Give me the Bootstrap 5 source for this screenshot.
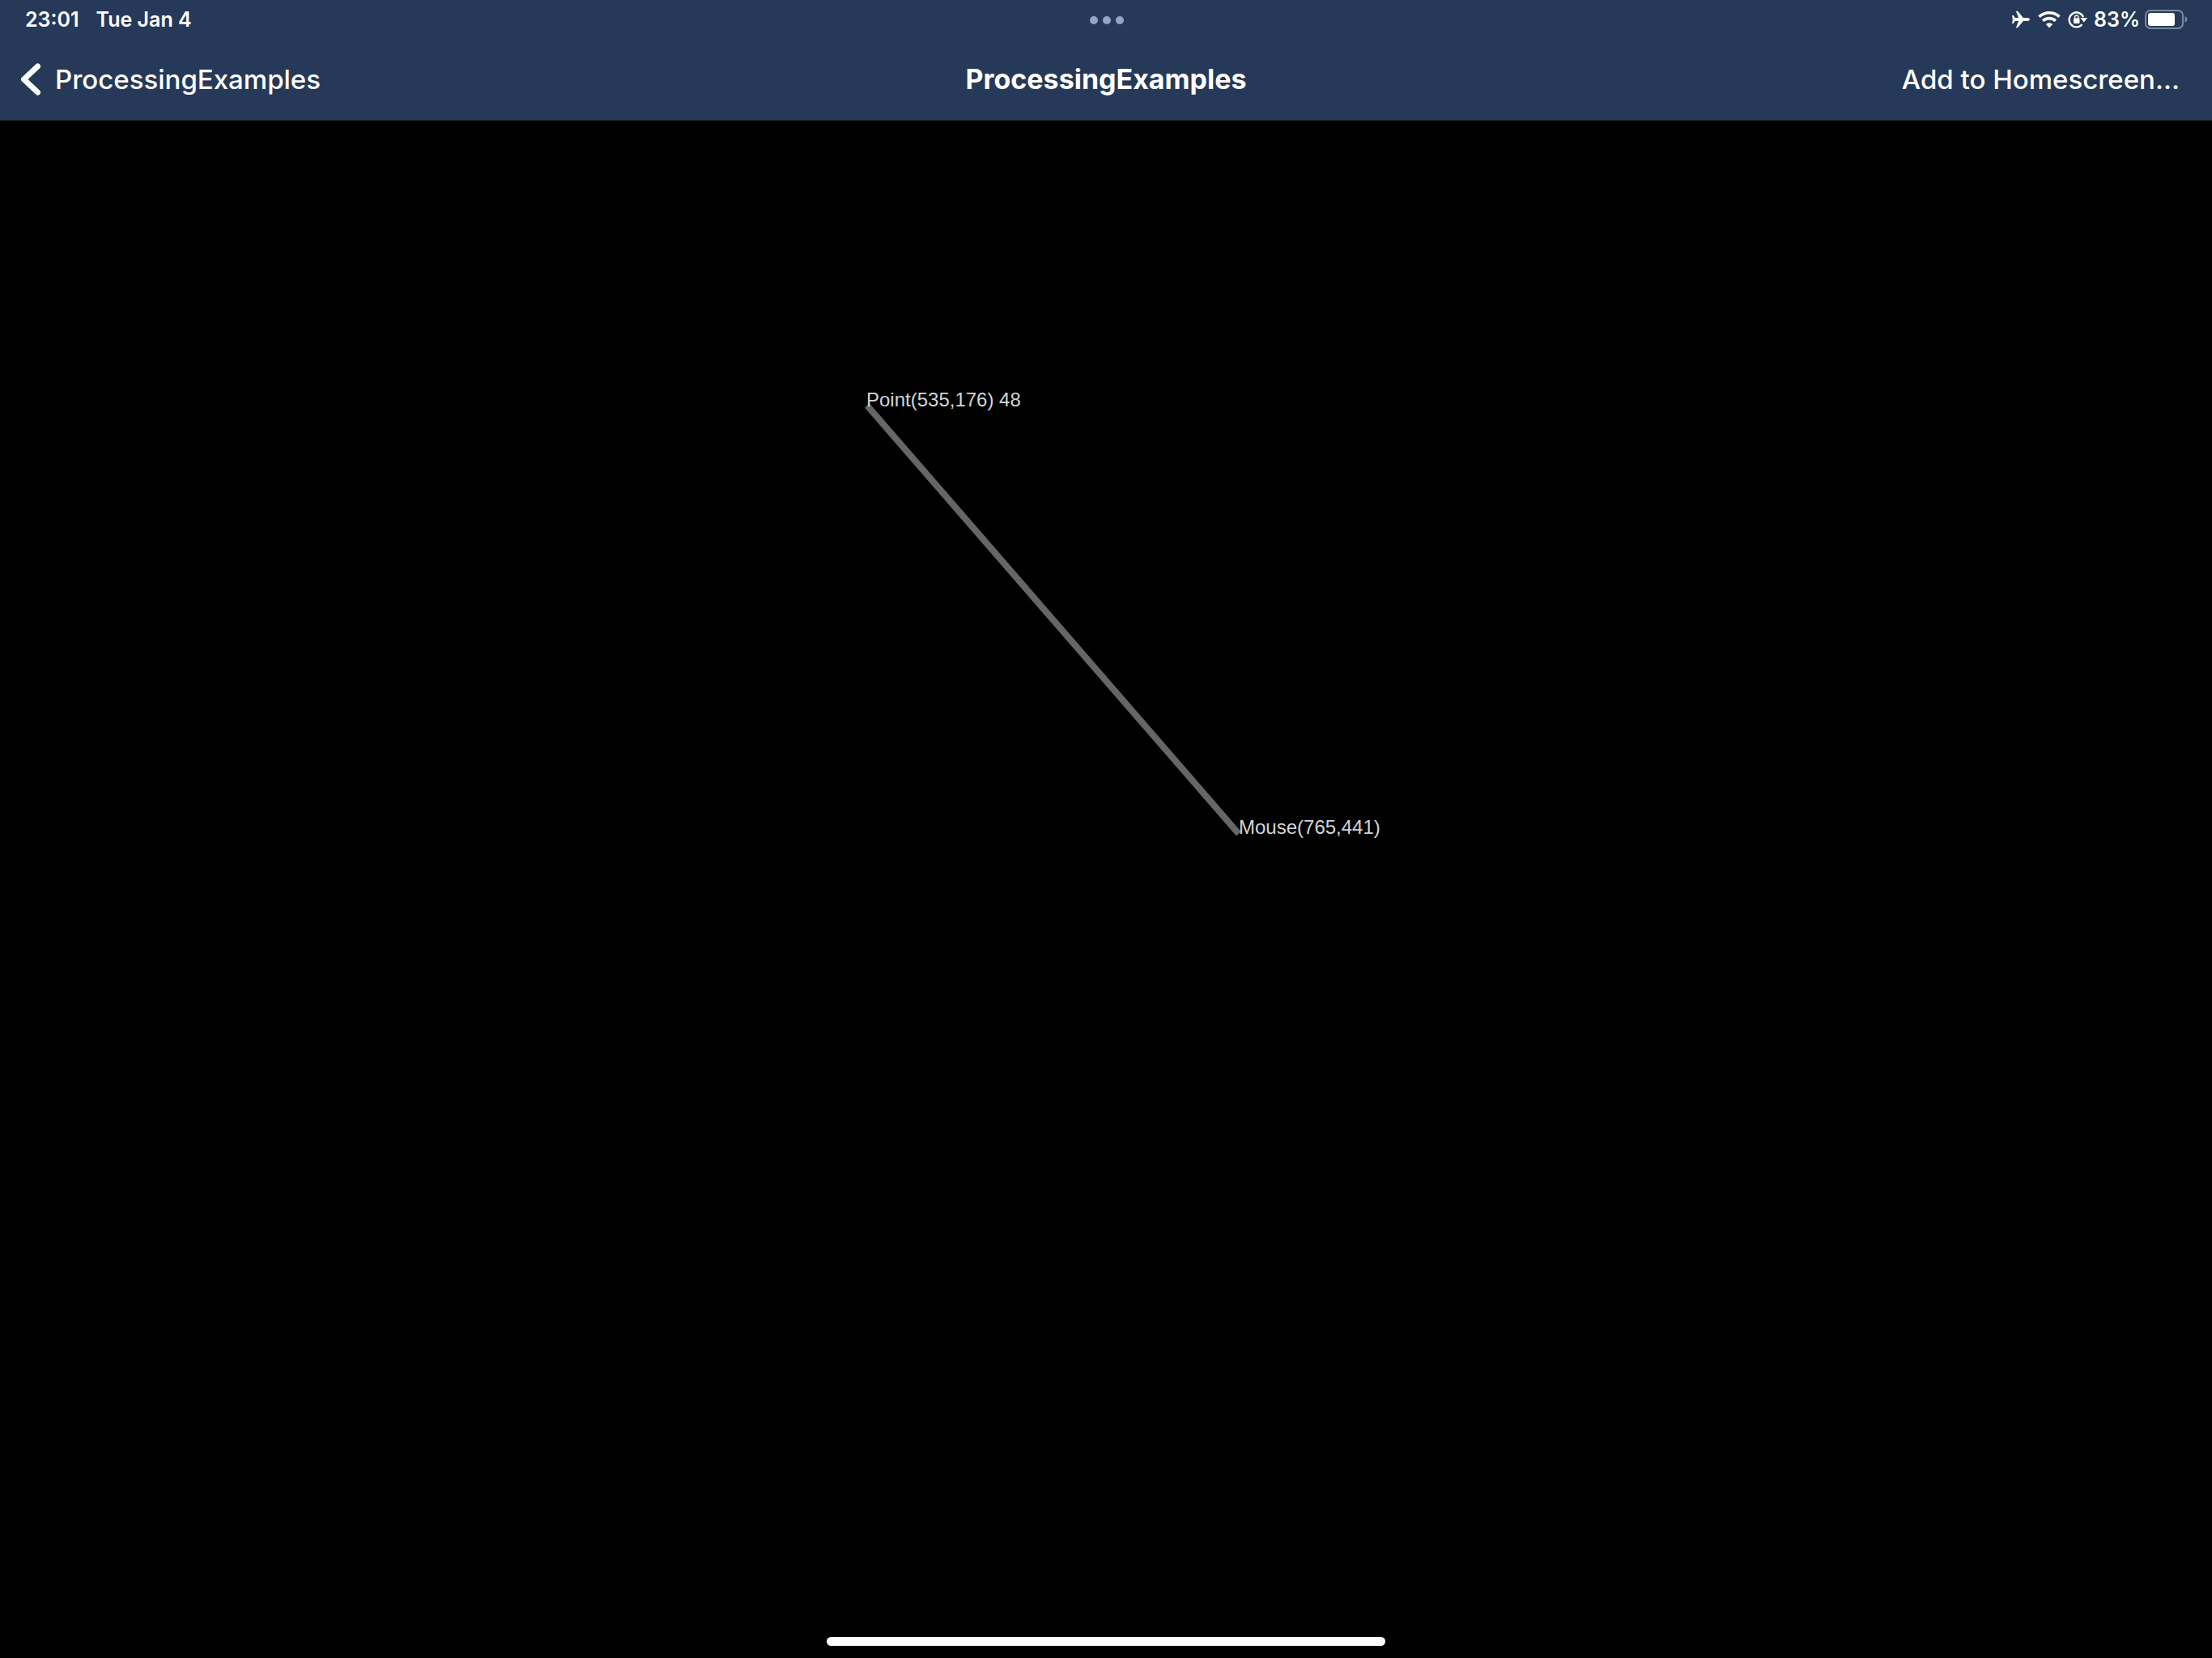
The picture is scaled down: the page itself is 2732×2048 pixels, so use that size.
<!DOCTYPE html>
<html lang="en">
<head>
<meta charset="utf-8">
<meta name="viewport" content="width=device-width, initial-scale=1">
<title>ProcessingExamples</title>
<link rel="stylesheet" href="https://cdn.jsdelivr.net/npm/bootstrap@5.3.0/dist/css/bootstrap.min.css">
<style>
  body { font-family: Inter, "Liberation Sans", sans-serif; background: #000; color: #fff; }
  .app-header { background: #263958; border-bottom: 1px solid #2b2f38; }
  .status-bar { height: 48px; padding: 0 30px; font-size: 25px; line-height: 48px; font-weight: 600; }
  .status-side, .nav-side { flex: 1 1 0; }
  .status-side { gap: 8px; }
  .status-clock { gap: 21px; padding-left: 1px; }
  .status-bar svg, .nav-row svg { display: block; flex: none; }
  .status-dots { gap: 6px; padding-top: 2px; }
  .status-dots span { width: 10px; height: 10px; border-radius: 50%; background: #93a6c8; }
  .battery { gap: 5px; }
  .nav-row { height: 100px; padding: 0 24px; }
  .nav-row a, .nav-row button { color: #fff; font-size: 33px; line-height: 40px; font-weight: 500; }
  .nav-row button { margin-right: 16px; }
  .nav-row h1 { font-size: 34px; line-height: 40px; font-weight: 700; }
  .back-link { gap: 18px; }
  .sketch { min-height: 0; }
  .sketch text { font-family: "Liberation Sans", Arial, sans-serif; font-size: 24px; fill: #d4d4d4; }
  .home-bar { bottom: 15px; width: 690px; height: 11px; border-radius: 6px; background: #fff; }
</style>
<script src="https://cdn.jsdelivr.net/npm/bootstrap@5.3.0/dist/js/bootstrap.bundle.min.js"></script>
</head>
<body class="vh-100 d-flex flex-column overflow-hidden">
<header class="app-header">
  <div class="status-bar d-flex align-items-center">
    <div class="status-side status-clock d-flex"><span>23:01</span><span>Tue Jan 4</span></div>
    <div class="status-dots d-flex" aria-hidden="true"><span></span><span></span><span></span></div>
    <div class="status-side d-flex justify-content-end align-items-center">
      <svg width="24" height="22" viewBox="0 0 24 22" fill="#fff" role="img" aria-label="Airplane mode"><path d="M23 11c0-1.200-1.500-2-3.500-2h-4.700L8.700 1.400Q8.100.7 7.200.7H5.900l3.200 8.300H4.800L2.600 6H1l.9 5L1 16h1.600l2.200-3h4.300l-3.200 8.300h1.300q.9 0 1.500-.7l6.100-7.600h4.700c2 0 3.500-.8 3.500-2z"/></svg>
      <svg width="30" height="22" viewBox="0 0 30 22" fill="none" role="img" aria-label="Wi-Fi"><path d="M2.500 7.800a18 18 0 0 1 25 0M7.200 12.800a11.200 11.200 0 0 1 15.600 0" stroke="#fff" stroke-width="3.600"/><path d="M10.800 17a6.200 6.200 0 0 1 8.400 0L15 21.500z" fill="#fff"/></svg>
      <svg width="24" height="22" viewBox="0 0 24 22" fill="none" role="img" aria-label="Rotation lock"><path d="M19 8A9 9 0 1 0 17.500 17.200" stroke="#fff" stroke-width="2.400"/><path d="M15.500 9H24l-4.200 5.500z" fill="#fff"/><rect x="7" y="9.500" width="7.500" height="6.500" rx="1" fill="#fff"/><path d="M8.700 10V8a2.050 2.050 0 0 1 4.100 0v2" stroke="#fff" stroke-width="1.500"/></svg>
      <div class="battery d-flex align-items-center">
        <span>83%</span>
        <svg width="54" height="24" viewBox="0 0 54 24" role="img" aria-label="Battery"><rect x="2" y="1" width="46" height="22" rx="6" fill="none" stroke="#7c899f" stroke-width="2"/><rect x="5" y="4" width="33" height="16" rx="3" fill="#fff"/><path d="M50.500 8q3 1.300 3 4t-3 4z" fill="#7c899f"/></svg>
      </div>
    </div>
  </div>
  <nav class="nav-row d-flex align-items-center">
    <div class="nav-side d-flex"><a href="#" class="back-link d-flex align-items-center text-decoration-none"><svg width="26" height="42" viewBox="0 0 26 42" fill="none"><path d="M22.500 5L5.500 21L22.500 37" stroke="#fff" stroke-width="7" stroke-linecap="round" stroke-linejoin="round"/></svg>ProcessingExamples</a></div>
    <h1 class="m-0">ProcessingExamples</h1>
    <div class="nav-side d-flex justify-content-end"><button type="button" class="btn p-0 border-0">Add to Homescreen…</button></div>
  </nav>
</header>
<main class="sketch flex-grow-1">
  <svg class="d-block w-100 h-100" role="img" aria-label="Line from point to mouse">
    <line x1="1071" y1="352" x2="1530" y2="881" stroke="#666" stroke-width="8"/>
    <text x="1070" y="353">Point(535,176) 48</text>
    <text x="1530" y="881">Mouse(765,441)</text>
  </svg>
</main>
<div class="home-bar position-absolute start-50 translate-middle-x"></div>
</body>
</html>
